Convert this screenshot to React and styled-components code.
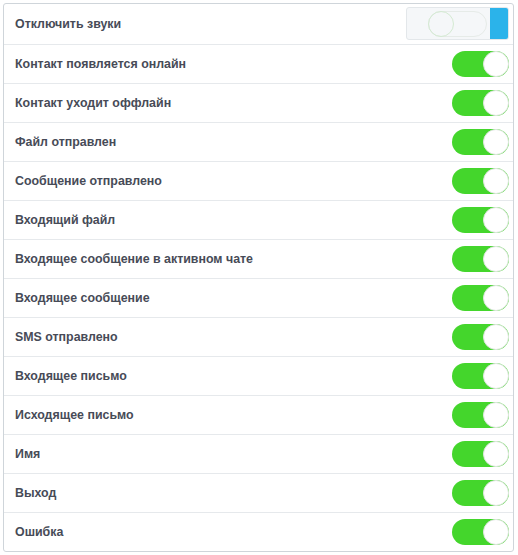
import React from 'react';
import styled, { createGlobalStyle } from 'styled-components';

const Global = createGlobalStyle`
  body {
    margin: 0;
    background: #ffffff;
    font-family: "Liberation Sans", Arial, sans-serif;
  }
`;

const items = [
  'Контакт появляется онлайн',
  'Контакт уходит оффлайн',
  'Файл отправлен',
  'Сообщение отправлено',
  'Входящий файл',
  'Входящее сообщение в активном чате',
  'Входящее сообщение',
  'SMS отправлено',
  'Входящее письмо',
  'Исходящее письмо',
  'Имя',
  'Выход',
  'Ошибка',
];

const Page = styled.div`
  padding: 3px 4px 4px 3px;
`;

const Panel = styled.div`
  border: 1px solid #cfd5da;
  border-radius: 3px;
  background: #fff;
  display: flex;
  flex-direction: column;
`;

const Row = styled.div`
  display: flex;
  align-items: center;
  justify-content: space-between;
  padding: 0 4px 1px 11px;
  box-sizing: border-box;
  border-top: ${(p) => (p.$first ? 'none' : '1px solid #e6e9ec')};
  height: ${(p) => (p.$first ? '40px' : '39px')};
`;

const Label = styled.span`
  font-size: 12.4px;
  font-weight: bold;
  color: #474b57;
`;

const MuteBox = styled.div`
  width: 101px;
  height: 31px;
  border: 1px solid #e3e7ea;
  border-radius: 3px;
  background: #f5f7f9;
  display: flex;
  align-items: center;
  justify-content: flex-end;
`;

const FadedTrack = styled.div`
  width: 57px;
  height: 24px;
  border: 1px solid #e6ebe8;
  border-radius: 13px;
  display: flex;
  align-items: center;
  margin-right: 3px;
`;

const FadedKnob = styled.div`
  width: 24px;
  height: 24px;
  border-radius: 50%;
  border: 1px solid #d4ead2;
  margin-left: -1px;
`;

const BlueBar = styled.div`
  width: 18px;
  height: 31px;
  background: #2bb3ea;
  border-radius: 0 2px 2px 0;
`;

const Switch = styled.div`
  width: 57px;
  height: 26px;
  border-radius: 13px;
  background: #44d62c;
  display: flex;
  align-items: center;
  justify-content: flex-end;
`;

const Knob = styled.div`
  width: 24px;
  height: 24px;
  border-radius: 50%;
  background: #fff;
  border: 1px solid #dfe6df;
`;

export default function App() {
  return (
    <Page>
      <Global />
      <Panel>
        <Row $first>
          <Label>Отключить звуки</Label>
          <MuteBox>
            <FadedTrack>
              <FadedKnob />
            </FadedTrack>
            <BlueBar />
          </MuteBox>
        </Row>
        {items.map((t) => (
          <Row key={t}>
            <Label>{t}</Label>
            <Switch>
              <Knob />
            </Switch>
          </Row>
        ))}
      </Panel>
    </Page>
  );
}
